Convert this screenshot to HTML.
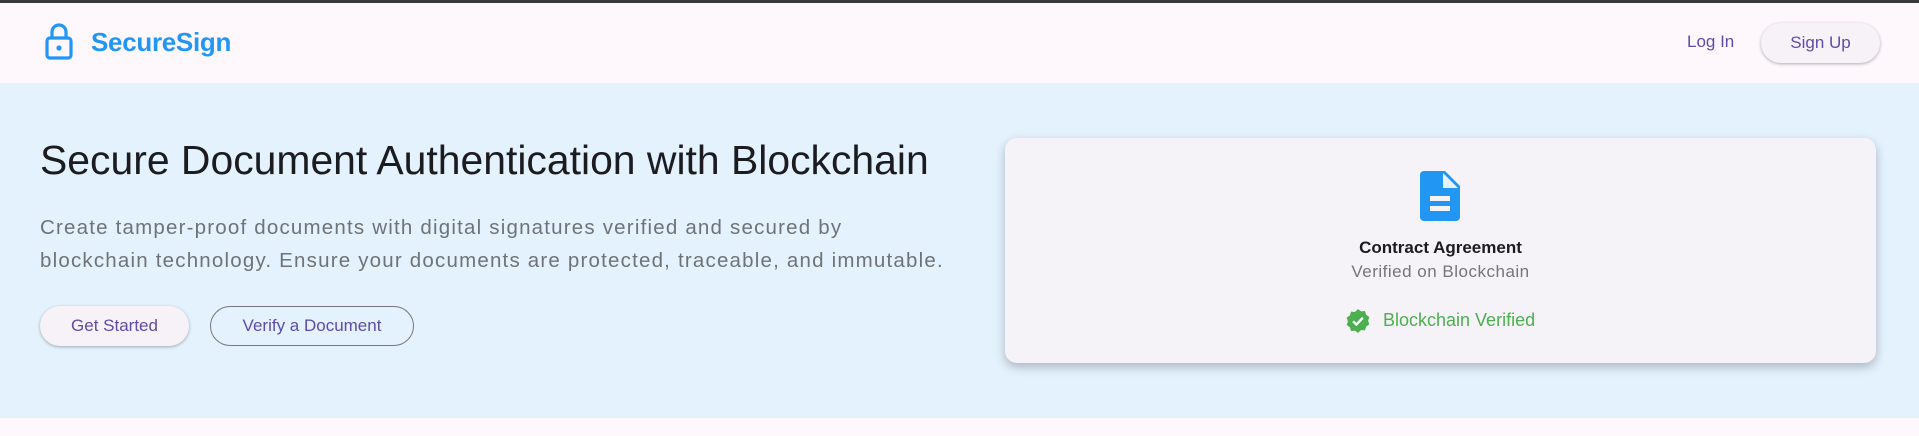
<!DOCTYPE html>
<html><head><meta charset="utf-8">
<style>
*{margin:0;padding:0;box-sizing:border-box}
body{width:1919px;height:436px;overflow:hidden;background:#fef7fc;font-family:"Liberation Sans",sans-serif;position:relative}
.top{position:absolute;left:0;top:0;width:1919px;height:3px;background:#3a3a3a}
.hdr{position:absolute;left:0;top:3px;width:1919px;height:80px;background:#fef7fc}
.hero{position:absolute;left:0;top:83px;width:1919px;height:335px;background:#e3f2fd}
.abs{position:absolute;white-space:nowrap}
.btn{position:absolute;border-radius:22px;display:flex;align-items:center;justify-content:center;color:#5e4ca8;font-size:17px}
</style></head><body>
<div class="top"></div>
<div class="hdr"></div>
<div class="hero"></div>

<svg class="abs" style="left:44px;top:23px" width="30" height="37" viewBox="0 0 30 37">
<rect x="3" y="15" width="24" height="20" rx="3" fill="none" stroke="#2196f3" stroke-width="3.2"/>
<path d="M8 15V9a7 7 0 0 1 14 0v6" fill="none" stroke="#2196f3" stroke-width="3.2"/>
<circle cx="15" cy="25" r="2.6" fill="#2196f3"/>
</svg>
<div class="abs" style="left:91px;top:27px;font-size:26px;font-weight:bold;color:#2196f3;letter-spacing:-0.3px">SecureSign</div>

<div class="abs" style="left:1687px;top:32px;font-size:17px;color:#5e4ca8">Log In</div>
<div class="btn" style="left:1761px;top:23px;width:119px;height:40px;background:#f6f2f8;box-shadow:0 1px 3px rgba(0,0,0,.3)">Sign Up</div>

<div class="abs" style="left:40px;top:137px;font-size:40.9px;color:#1c1b1f">Secure Document Authentication with Blockchain</div>
<div class="abs" style="left:40px;top:211px;font-size:20.5px;line-height:33px;color:#6f7378;letter-spacing:1.2px">Create tamper-proof documents with digital signatures verified and secured by<br>blockchain technology. Ensure your documents are protected, traceable, and immutable.</div>

<div class="btn" style="left:40px;top:306px;width:149px;height:40px;background:#f6f2f8;box-shadow:0 1px 3px rgba(0,0,0,.3)">Get Started</div>
<div class="btn" style="left:210px;top:306px;width:204px;height:40px;border:1px solid #79747e">Verify a Document</div>

<div style="position:absolute;left:1005px;top:138px;width:871px;height:225px;background:#f5f2f8;border-radius:12px;box-shadow:0 4px 10px rgba(0,0,0,.25)"></div>
<svg class="abs" style="left:1420px;top:171px" width="40" height="50" viewBox="0 0 40 50">
<path d="M4 0H25L40 15V46a4 4 0 0 1-4 4H4a4 4 0 0 1-4-4V4a4 4 0 0 1 4-4z" fill="#2196f3"/>
<path d="M23 2L38 17H23z" fill="#e3f2fd"/>
<rect x="10" y="25" width="20" height="5" fill="#f5f2f8"/>
<rect x="10" y="35" width="20" height="5" fill="#f5f2f8"/>
</svg>
<div class="abs" style="left:1005px;width:871px;text-align:center;top:238px;font-size:17px;font-weight:bold;color:#1c1b1f">Contract Agreement</div>
<div class="abs" style="left:1005px;width:871px;text-align:center;top:262px;font-size:17px;color:#77757a;letter-spacing:0.5px">Verified on Blockchain</div>
<svg class="abs" style="left:1345px;top:308px" width="26" height="26" viewBox="0 0 24 24">
<path d="M12 1l2.9 2.1 3.5-.3 1.1 3.4 2.9 2.1-1.1 3.4 1.1 3.4-2.9 2.1-1.1 3.4-3.5-.3L12 23l-2.9-2.1-3.5.3-1.1-3.4-2.9-2.1 1.1-3.4-1.1-3.4 2.9-2.1 1.1-3.4 3.5.3z" fill="#4caf50"/>
<path d="M7.5 12.3l3 3 6-6.3" fill="none" stroke="#fff" stroke-width="2.2"/>
</svg>
<div class="abs" style="left:1383px;top:310px;font-size:18px;color:#4caf50">Blockchain Verified</div>
</body></html>
